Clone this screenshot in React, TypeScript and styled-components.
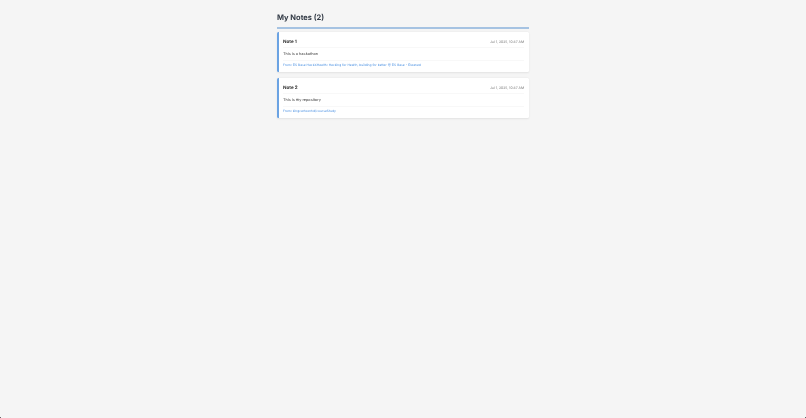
import styled, { createGlobalStyle } from "styled-components";

const Global = createGlobalStyle`
  html, body {
    margin: 0;
    height: 100%;
    background: #f5f5f5;
    font-family: "Inter", "Liberation Sans", sans-serif;
    text-rendering: geometricPrecision;
    overflow: hidden;
  }
`;

const Page = styled.div`
  width: 252px;
  margin: 0 auto;
  padding-top: 13px;
  filter: blur(0.2px);
`;

const Title = styled.h1`
  margin: 0 0 3px;
  padding-bottom: 2px;
  height: 12px;
  font-size: 7.5px;
  line-height: 9px;
  font-weight: 700;
  color: #333b46;
  border-bottom: 2px solid #a6c3e2;
`;

const List = styled.div`
  display: flex;
  flex-direction: column;
  gap: 6px;
`;

const Card = styled.article`
  height: 40px;
  box-sizing: border-box;
  padding: 5px 5px 0 4px;
  background: #fff;
  border-left: 2px solid #6ba3e3;
  border-radius: 1.5px;
  box-shadow: 0 0.5px 2px rgba(0, 0, 0, 0.08);
`;

const CardHead = styled.header`
  display: flex;
  justify-content: space-between;
  align-items: center;
  height: 9px;
  padding-bottom: 1px;
  border-bottom: 1px solid #f8f8f8;
`;

const NoteName = styled.h3`
  margin: 0;
  padding-top: 2px;
  font-size: 4.6px;
  font-weight: 700;
  color: #333;
`;

const NoteDate = styled.span`
  font-size: 3.4px;
  color: #777;
`;

const Body = styled.p`
  margin: 3px 0 0;
  height: 9px;
  font-size: 3.85px;
  line-height: 6px;
  color: #3a3a3a;
  border-bottom: 1px solid #f8f8f8;
`;

const Source = styled.a`
  display: block;
  margin-top: 2px;
  font-size: 3.28px;
  line-height: 5px;
  color: #4a90e2;
`;

// the dark specks of the window's rounded corners
const WindowCorner = styled.i<{ $side: "left" | "right" }>`
  position: fixed;
  bottom: 0;
  ${(p) => p.$side}: 0;
  width: 1px;
  height: 1px;
  background: #666;
`;

const notes = [
  {
    id: 1,
    name: "Note 1",
    body: "This is a hackathon",
    source: "From: CS Base HackXHealth: Hacking for Health, building for better @ CS Base - Cleaned",
  },
  {
    id: 2,
    name: "Note 2",
    body: "This is my repository",
    source: "From: kingcartoonhd/courseStudy",
  },
];

export default function App() {
  return (
    <>
      <Global />
      <Page>
        <Title>My Notes (2)</Title>
        <List>
          {notes.map((n) => (
            <Card key={n.id}>
              <CardHead>
                <NoteName>{n.name}</NoteName>
                <NoteDate>Jul 1, 2025, 10:37 AM</NoteDate>
              </CardHead>
              <Body>{n.body}</Body>
              <Source>{n.source}</Source>
            </Card>
          ))}
        </List>
      </Page>
      <WindowCorner $side="left" />
      <WindowCorner $side="right" />
    </>
  );
}
